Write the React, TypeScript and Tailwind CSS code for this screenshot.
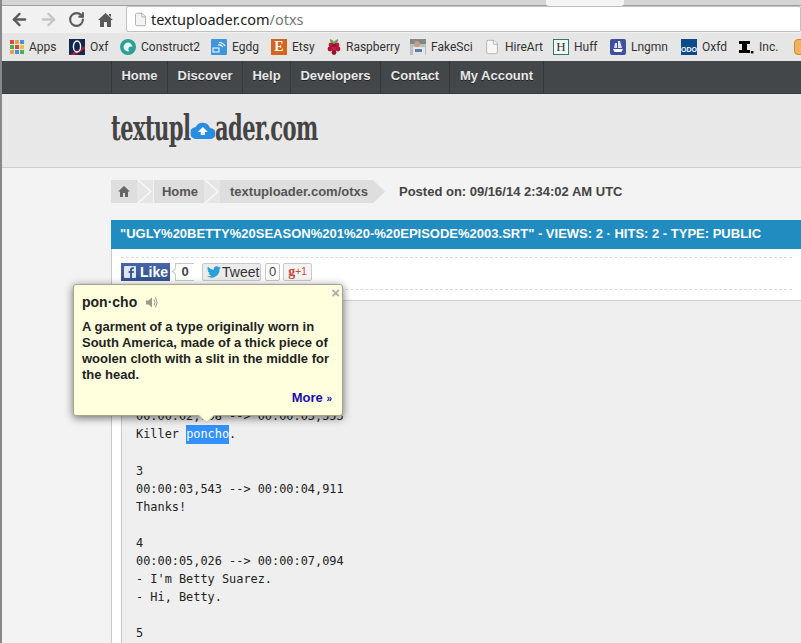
import { ArrowLeft, ArrowRight, RotateCw, File } from 'lucide-react';

function AppsIcon() {
  const colors = ['#d9473f', '#e8a33a', '#4a8fe0', '#4caf50', '#d9473f', '#e8c33a', '#e8a33a', '#4a8fe0', '#4caf50'];
  return (
    <div className="grid grid-cols-3 gap-px w-[14px] h-[14px]">
      {colors.map((c, i) => (
        <div key={i} style={{ backgroundColor: c }} />
      ))}
    </div>
  );
}

function OxfIcon() {
  return (
    <svg width="16" height="16" viewBox="0 0 16 16">
      <rect width="16" height="16" fill="#12284f" />
      <path d="M0 16 L16 7 V10 L6 16Z" fill="#a3213a" />
      <ellipse cx="8" cy="7.5" rx="3.6" ry="5.5" fill="none" stroke="#fff" strokeWidth="1.4" />
    </svg>
  );
}

function ConstructIcon() {
  return (
    <svg width="16" height="16" viewBox="0 0 16 16">
      <circle cx="8" cy="8" r="8" fill="#2aa198" />
      <circle cx="8" cy="8" r="4.4" fill="#e8f6f4" />
      <circle cx="11" cy="10" r="2.6" fill="#2aa198" />
    </svg>
  );
}

function EgdgIcon() {
  return (
    <svg width="16" height="16" viewBox="0 0 16 16">
      <rect width="16" height="16" rx="1" fill="#3d95dc" />
      <rect x="2" y="9" width="6" height="4" fill="none" stroke="#fff" strokeWidth="1" />
      <path d="M7 6 A5 5 0 0 1 12 8 M8 3.5 A7 7 0 0 1 14 7" fill="none" stroke="#fff" strokeWidth="1.2" />
    </svg>
  );
}

function EtsyIcon() {
  return (
    <div className="w-4 h-4 bg-[#d5641c] text-white text-center text-[14px] leading-4 font-bold font-['Liberation_Serif',serif]">
      E
    </div>
  );
}

function RaspberryIcon() {
  return (
    <svg width="14" height="16" viewBox="0 0 14 16">
      <path d="M3 0 Q6 1 7 3 Q8 1 11 0 Q12 3 8 4 H6 Q2 3 3 0Z" fill="#5aa83e" />
      <circle cx="4" cy="6" r="2.4" fill="#b9183f" />
      <circle cx="10" cy="6" r="2.4" fill="#b9183f" />
      <circle cx="7" cy="6.5" r="2.2" fill="#98112f" />
      <circle cx="3" cy="10" r="2.4" fill="#a9143a" />
      <circle cx="11" cy="10" r="2.4" fill="#a9143a" />
      <circle cx="7" cy="10" r="2.6" fill="#c01c45" />
      <circle cx="7" cy="13.6" r="2.4" fill="#98112f" />
    </svg>
  );
}

function FakeSciIcon() {
  return (
    <svg width="16" height="16" viewBox="0 0 16 16">
      <rect width="16" height="16" fill="#b9bfc4" />
      <rect y="0" width="16" height="5" fill="#7f8a84" />
      <circle cx="7" cy="5" r="3" fill="#c99b80" />
      <rect x="3" y="8" width="12" height="8" fill="#e2e6ea" />
      <rect x="5" y="10" width="7" height="3" fill="#5f7fa8" />
    </svg>
  );
}

function PageIcon() {
  return <File size={16} strokeWidth={1} color="#9a9a9a" fill="#f6f6f6" />;
}

function HuffIcon() {
  return (
    <div className="w-[14px] h-[14px] box-content bg-[#f4f7f4] border border-[#2d7a68] text-[#333] text-center text-[13px] leading-[14px] font-['Liberation_Serif',serif]">
      H
    </div>
  );
}

function LngmnIcon() {
  return (
    <svg width="16" height="16" viewBox="0 0 16 16">
      <rect width="16" height="16" rx="2" fill="#3f4f9f" />
      <path d="M3 10 H13 L11.5 13 H4.5Z" fill="#fff" />
      <path d="M5 4 H7 V9 H4Z M8 2 H10 L12 9 H8Z" fill="#dfe3f4" />
    </svg>
  );
}

function OxfdIcon() {
  return (
    <div className="w-4 h-4 bg-[#0b4b8c] flex items-end justify-center overflow-hidden">
      <span className="text-white text-[7px] leading-[10px] font-bold font-['Liberation_Sans',sans-serif]">ODO</span>
    </div>
  );
}

function IncIcon() {
  return (
    <svg width="16" height="16" viewBox="0 0 16 16">
      <path d="M1 2 H12 V5 H9 V11 H12 V14 H1 V11 H4 V5 H1Z" fill="#000" />
      <rect x="13" y="12" width="2.4" height="2.4" fill="#000" />
    </svg>
  );
}

function LastIcon() {
  return <div className="w-4 h-4 rounded-sm bg-[#f0b25c] border border-[#d98b25]" />;
}

const bookmarks = [
  { label: 'Apps', icon: <AppsIcon />, width: 'w-[59px]' },
  { label: 'Oxf', icon: <OxfIcon />, width: 'w-[51px]' },
  { label: 'Construct2', icon: <ConstructIcon />, width: 'w-[91px]' },
  { label: 'Egdg', icon: <EgdgIcon />, width: 'w-[60px]' },
  { label: 'Etsy', icon: <EtsyIcon />, width: 'w-[56px]' },
  { label: 'Raspberry', icon: <RaspberryIcon />, width: 'w-[83px]' },
  { label: 'FakeSci', icon: <FakeSciIcon />, width: 'w-[74px]' },
  { label: 'HireArt', icon: <PageIcon />, width: 'w-[69px]' },
  { label: 'Huff', icon: <HuffIcon />, width: 'w-[57px]' },
  { label: 'Lngmn', icon: <LngmnIcon />, width: 'w-[71px]' },
  { label: 'Oxfd', icon: <OxfdIcon />, width: 'w-[57px]' },
  { label: 'Inc.', icon: <IncIcon />, width: 'w-[56px]' },
  { label: '', icon: <LastIcon />, width: 'w-[16px]' },
];

const navItems = [
  { label: 'Home', width: 'w-[56px]' },
  { label: 'Discover', width: 'w-[75px]' },
  { label: 'Help', width: 'w-[48px]' },
  { label: 'Developers', width: 'w-[90px]' },
  { label: 'Contact', width: 'w-[69px]' },
  { label: 'My Account', width: 'w-[94px]' },
];

function Chevron() {
  return (
    <svg width="16" height="23" viewBox="0 0 16 23" className="shrink-0">
      <rect width="16" height="23" fill="#e6e6e6" />
      <path d="M1 0 L14 11.5 L1 23" fill="none" stroke="#fafafa" strokeWidth="1.2" />
    </svg>
  );
}

function Popup() {
  return (
    <div className="absolute left-[71px] top-[284px] w-[270px] h-[132px] bg-[#ffffde] border border-[#a5a58f] rounded-[3px] shadow-[0_2px_8px_rgba(0,0,0,0.55)] pl-2 pr-[10px] pt-[9px] font-['Liberation_Sans',sans-serif] text-[#222]">
      <span className="absolute right-[2px] top-0 text-[#aaa] text-[15px] leading-4 font-bold">×</span>
      <div className="flex items-center gap-2">
        <span className="text-[14px] leading-4 font-bold">pon·cho</span>
        <svg width="13" height="13" viewBox="0 0 13 13">
          <path d="M1 4.5 H3.5 L7 1.5 V11.5 L3.5 8.5 H1Z" fill="#9a9a8a" />
          <path d="M9 3.5 Q11 6.5 9 9.5 M10.5 1.5 Q13.5 6.5 10.5 11.5" fill="none" stroke="#9a9a8a" strokeWidth="1" />
        </svg>
      </div>
      <p className="mt-[9px] text-[13px] leading-4 font-bold">
        A garment of a type originally worn in South America, made of a thick piece of woolen cloth with a slit in the middle for the head.
      </p>
      <div className="mt-[7px] text-right text-[13px] leading-4 font-bold text-[#1a0dab]">
        More <span className="text-[10px]">»</span>
      </div>
      <div className="absolute left-[127px] -bottom-[6px] w-[11px] h-[11px] rotate-45 bg-[#ffffde] border-r border-b border-[#c9c9b0]" />
    </div>
  );
}

export default function App() {
  return (
    <div className="relative w-[801px] h-[643px] overflow-hidden bg-[#f3f3f3] border-l-2 border-[#888] flex flex-col font-['Liberation_Sans',sans-serif]">
      {/* browser chrome */}
      <div className="h-[6px] shrink-0 bg-[#d4d4d4] border-b border-[#a0a0a0] flex">
        <div className="ml-[544px] w-[78px] h-[6px] bg-[#f4f4f4] rounded-b-[3px]" />
      </div>
      <div className="h-[27px] shrink-0 flex items-center bg-[#f1f1f1]">
        <div className="w-[124px] shrink-0 flex items-center">
          <ArrowLeft size={19} strokeWidth={3} color="#5a5a5a" className="ml-[8px]" />
          <ArrowRight size={19} strokeWidth={3} color="#c6c6c6" className="ml-[10px]" />
          <RotateCw size={17} strokeWidth={3} color="#5a5a5a" className="ml-[10px]" />
          <svg width="15" height="14" viewBox="0 0 15 14" className="ml-[13px]">
            <path d="M7.5 0 L15 7 L13 7 V14 H9 V9 H6 V14 H2 V7 H0Z M11 1 H13 V4 L11 2.5Z" fill="#5a5a5a" />
          </svg>
        </div>
        <div className="flex-1 h-[26px] -mt-[2px] bg-white border border-[#c0c0c0] rounded-[2px] flex items-center pl-[6px] pt-[2px]">
          <File size={15} strokeWidth={1.2} color="#9a9a9a" fill="#f4f4f4" />
          <span className="ml-[3px] text-[14.5px] font-['Noto_Sans',sans-serif] text-[#222]">
            textuploader.com<span className="text-[#777]">/otxs</span>
          </span>
        </div>
      </div>
      <div className="h-[28px] shrink-0 flex items-center bg-[#e6e6e6] pl-[8px] overflow-hidden font-['Roboto',sans-serif] text-[12px] text-[#333]">
        {bookmarks.map((b) => (
          <div key={b.label || 'last'} className={`${b.width} shrink-0 flex items-center gap-[5px]`}>
            {b.icon}
            {b.label && <span>{b.label}</span>}
          </div>
        ))}
      </div>

      {/* site nav */}
      <div className="h-[33px] shrink-0 flex items-stretch pl-[109px] bg-[#43474a] border-b border-[#383b3d]">
        <div className="flex border-l border-[#35383a]">
          {navItems.map((n) => (
            <div
              key={n.label}
              className={`${n.width} flex items-center justify-center pb-[3px] border-r border-[#35383a] text-[13px] font-bold text-[#e8e8e8] [text-shadow:0_1px_0_#222]`}
            >
              {n.label}
            </div>
          ))}
        </div>
      </div>

      {/* logo */}
      <div className="h-[74px] shrink-0 bg-[#e8e8e8] border-b border-[#cfcfcf] flex items-center pl-[109px] pb-[8px]">
        <div className="flex items-center font-['DejaVu_Serif',serif] font-bold text-[36px] leading-none text-[#444] tracking-[-1px] origin-left scale-x-[0.585]">
          <span>textupl</span>
          <svg width="42" height="18" viewBox="0 0 24 18" preserveAspectRatio="none" className="shrink-0 mt-[7px]">
            <path d="M6 18 A6 6 0 0 1 5 6 A7.5 7.5 0 0 1 19 7 A5.5 5.5 0 0 1 19 18Z" fill="#2a8ee0" />
            <path d="M12 6 L17 11 H14 V14 H10 V11 H7Z" fill="#fff" />
          </svg>
          <span>ader.com</span>
        </div>
      </div>

      {/* breadcrumb */}
      <div className="h-[52px] shrink-0 pl-[109px] flex items-center bg-[#f3f3f3] pb-[5px]">
        <div className="w-[26px] h-[23px] bg-[#dedede] flex items-center justify-center">
          <svg width="12" height="11" viewBox="0 0 12 11">
            <path d="M6 0 L12 5.5 H10 V11 H7 V7 H5 V11 H2 V5.5 H0Z" fill="#666" />
          </svg>
        </div>
        <Chevron />
        <div className="w-[50px] h-[23px] ml-[1px] pl-[2px] bg-[#dedede] flex items-center justify-center text-[13px] font-bold text-[#555]">
          Home
        </div>
        <Chevron />
        <div className="w-[153px] h-[23px] bg-[#dedede] flex items-center justify-end pr-[5px] text-[13px] font-bold text-[#555]">
          textuploader.com/otxs
        </div>
        <svg width="12" height="23" viewBox="0 0 12 23" className="shrink-0">
          <path d="M0 0 L12 11.5 L0 23Z" fill="#dedede" />
        </svg>
        <span className="ml-[14px] text-[13px] font-bold text-[#444]">Posted on: 09/16/14 2:34:02 AM UTC</span>
      </div>

      {/* content */}
      <div className="flex-1 ml-[109px] bg-[#efefef] border-l border-[#c8c8c8] flex flex-col">
        <div className="h-[29px] shrink-0 -ml-px bg-[#218cbf] flex items-center pl-[9px] pb-[2px] text-[13px] font-bold text-white whitespace-nowrap">
          "UGLY%20BETTY%20SEASON%201%20-%20EPISODE%2003.SRT" - VIEWS: 2 · HITS: 2 - TYPE: PUBLIC
        </div>
        <div className="h-[52px] shrink-0 bg-white border-b border-[#cfcfcf] px-[9px] pt-2">
          <div className="h-[33px] border-y border-dashed border-[#dcdcdc] flex items-center pb-[3px]">
            <div className="h-[18px] w-[49px] bg-gradient-to-b from-[#4965a8] to-[#34528f] flex items-center pl-[3px] gap-[4px] text-white text-[14px] font-bold">
              <svg width="12" height="12" viewBox="0 0 12 12" className="shrink-0">
                <rect width="12" height="12" rx="1" fill="#dfe5f2" />
                <path d="M8 12 V7 H9.6 L10 5 H8 V4 Q8 3 9 3 H10 V1.2 H8.6 Q6 1.2 6 3.8 V5 H4.6 V7 H6 V12Z" fill="#3b5998" />
              </svg>
              Like
            </div>
            <div className="relative ml-[5px] w-[19px] h-[18px] bg-white border border-[#c8c8c8] border-r-0 flex items-center justify-center text-[13px] font-bold text-[#444]">
              0
              <div className="absolute -left-[3px] top-[5px] w-[5px] h-[5px] rotate-45 bg-white border-l border-b border-[#c8c8c8]" />
            </div>
            <div className="ml-[8px] w-[59px] h-[18px] bg-[#ececec] border border-[#c8c8c8] rounded-[2px] flex items-center pl-[4px] gap-px text-[14px] text-[#333]">
              <svg width="14" height="12" viewBox="0 0 24 20">
                <path d="M24 2.4a10 10 0 0 1-2.8.8A5 5 0 0 0 23.3.5a10 10 0 0 1-3.1 1.2 4.9 4.9 0 0 0-8.4 4.5A14 14 0 0 1 1.7 1a4.9 4.9 0 0 0 1.5 6.6A5 5 0 0 1 1 7v.1a4.9 4.9 0 0 0 3.9 4.8 5 5 0 0 1-2.2.1 4.9 4.9 0 0 0 4.6 3.4A10 10 0 0 1 0 17.4 14 14 0 0 0 21.5 5z" fill="#2a9fd8" />
              </svg>
              Tweet
            </div>
            <div className="ml-[4px] w-[15px] h-[18px] bg-white border border-[#c8c8c8] rounded-[2px] flex items-center justify-center text-[13px] text-[#444]">0</div>
            <div className="ml-[3px] w-[29px] h-[18px] bg-[#f4f4f4] border border-[#c8c8c8] rounded-[2px] flex items-center justify-center text-[#c8473a]">
              <span className="font-['Liberation_Serif',serif] font-bold text-[14px] leading-none">g</span>
              <span className="text-[10px] leading-none">+1</span>
            </div>
          </div>
        </div>
        <div className="flex-1 flex overflow-hidden">
          <div className="w-[10px] shrink-0 bg-white border-r border-[#c8c8c8]" />
          <pre className="pl-[14px] pt-[106px] font-['DejaVu_Sans_Mono',monospace] text-[11.9px] leading-[18px] text-[#222]">
            {`00:00:02,108 --> 00:00:03,353
Killer `}
            <span className="bg-[#3390ff] text-white inline-block h-[19px]">poncho</span>
            {`.

3
00:00:03,543 --> 00:00:04,911
Thanks!

4
00:00:05,026 --> 00:00:07,094
- I'm Betty Suarez.
- Hi, Betty.

5
`}
          </pre>
        </div>
      </div>

      <Popup />
    </div>
  );
}
